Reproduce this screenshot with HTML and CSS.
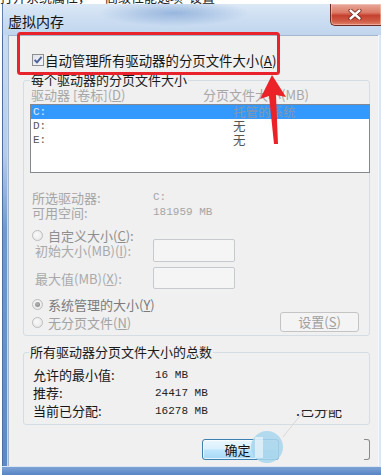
FILE: index.html
```html
<!DOCTYPE html>
<html lang="zh-CN">
<head>
<meta charset="utf-8">
<title>虚拟内存</title>
<link rel="stylesheet" href="styles.css">
</head>
<body>
<div class="topstrip"><span class="topstrip-text">打开系统属性，<span class="gap"></span>高级性能选项<span class="gap2"></span>设置</span></div>
<div class="window">
  <div class="titlebar">
    <span class="title">虚拟内存</span>
    <span class="close">
      <svg width="14" height="11" viewBox="0 0 14 11"><path d="M2.5 1.5 L11.5 9.5 M11.5 1.5 L2.5 9.5" stroke="#6b2019" stroke-width="4" stroke-linecap="round"/><path d="M2.5 1.5 L11.5 9.5 M11.5 1.5 L2.5 9.5" stroke="#fff" stroke-width="2.4" stroke-linecap="round"/></svg>
    </span>
  </div>
  <div class="frame-left"></div>
  <div class="client">
    <div class="auto-row">
      <span class="checkbox"><svg width="12" height="12" viewBox="0 0 12 12"><defs><linearGradient id="cb" x1="0" y1="0" x2="1" y2="1"><stop offset="0" stop-color="#dfe3ea"/><stop offset="1" stop-color="#f6f7f9"/></linearGradient></defs><rect x="0.5" y="0.5" width="11" height="11" fill="url(#cb)" stroke="#8f8f8f"/><path d="M2.6 5.8 L5 8.4 L9.6 2.8" fill="none" stroke="#4a5e9a" stroke-width="1.9"/></svg></span>
      <span class="auto-text">自动管理所有驱动器的分页文件大小(<u>A</u>)</span>
    </div>

    <fieldset class="group group-drives">
      <legend>每个驱动器的分页文件大小</legend>
      <div class="list-header"><span class="h-drive">驱动器 [卷标](<u>D</u>)</span><span>分页文件大小(MB)</span></div>
      <div class="listbox">
        <div class="lrow selected"><span class="l-drive mono">C:</span><span class="l-size">托管的系统</span></div>
        <div class="lrow"><span class="l-drive mono">D:</span><span class="l-size">无</span></div>
        <div class="lrow"><span class="l-drive mono">E:</span><span class="l-size">无</span></div>
      </div>
      <div class="info">
        <div class="info-row"><span class="info-label">所选驱动器:</span><span class="mono">C:</span></div>
        <div class="info-row"><span class="info-label">可用空间:</span><span class="mono">181959 MB</span></div>
      </div>
      <div class="radio-row custom"><span class="radio"></span><span class="radio-text">自定义大小(<u>C</u>):</span></div>
      <div class="field-row initial"><span class="field-label">初始大小(MB)(<u>I</u>):</span><span class="textbox"></span></div>
      <div class="field-row max"><span class="field-label">最大值(MB)(<u>X</u>):</span><span class="textbox"></span></div>
      <div class="radio-row system"><span class="radio checked"></span><span class="radio-text">系统管理的大小(<u>Y</u>)</span></div>
      <div class="radio-row none"><span class="radio"></span><span class="radio-text">无分页文件(<u>N</u>)</span><span class="btn-set">设置(<u>S</u>)</span></div>
    </fieldset>

    <fieldset class="group group-total">
      <legend>所有驱动器分页文件大小的总数</legend>
      <div class="total-row"><span class="total-label">允许的最小值:</span><span class="mono">16 MB</span></div>
      <div class="total-row"><span class="total-label">推荐:</span><span class="mono">24417 MB</span></div>
      <div class="total-row"><span class="total-label">当前已分配:</span><span class="mono">16278 MB</span></div>
    </fieldset>

    <div class="buttons">
      <span class="btn ok">确定</span>
      <span class="btn cancel"></span>
    </div>
  </div>
  <div class="frame-right"></div>
  <div class="frame-bottom"></div>
</div>

<div class="ghost-text"><span>.已分配</span></div>

<svg class="annot" width="381" height="475" viewBox="0 0 381 475">
  <line x1="283" y1="437" x2="303" y2="412" stroke="#d9d9d9" stroke-width="1"/>
  <circle cx="267" cy="447" r="16" fill="rgba(168,213,236,0.88)"/>
  <rect x="255" y="437" width="8" height="21" fill="rgba(255,255,255,0.55)"/>
  <rect x="18.5" y="33.5" width="260" height="40" rx="2" fill="none" stroke="#e8232b" stroke-width="3"/>
  <polygon points="272,75 286,97 276,95 278,144 274,144 269,96 260,99" fill="#ec2229"/>
</svg>
</body>
</html>
```
FILE: styles.css
```css
* { box-sizing: border-box; }
html, body { margin: 0; padding: 0; }
body {
  width: 381px;
  height: 475px;
  overflow: hidden;
  position: relative;
  background: #fff;
  font-family: "Noto Sans CJK SC", "Noto Sans", sans-serif;
  font-size: 13px;
  color: #1a1a1a;
}
u { text-decoration-thickness: 1px; text-underline-offset: 1px; }

.topstrip {
  height: 4px;
  overflow: hidden;
  clip-path: inset(0);
  contain: paint;
  white-space: nowrap;
}
.topstrip-text {
  display: block;
  font-size: 13px;
  line-height: 13px;
  transform: translateY(-10px);
  color: #222;
}
.gap { display: inline-block; width: 14px; }
.gap2 { display: inline-block; width: 6px; }

.window {
  margin-left: 2px;
  width: 379px;
  height: 471px;
  display: grid;
  grid-template-columns: 6px 370px 3px;
  grid-template-rows: 31px 431px 9px;
}

.titlebar {
  grid-column: 1 / 4;
  display: flex;
  align-items: flex-start;
  background:
    radial-gradient(ellipse 75px 13px at 172px 9px, rgba(112, 152, 206, 0.6), rgba(112, 152, 206, 0) 100%),
    linear-gradient(180deg, #dbe8f6 0%, #cadcf1 55%, #c0d5ed 100%);
  box-shadow: inset 1px 0 0 #5f7fae;
}
.title { margin: 9px 0 0 6px; font-size: 14px; line-height: 16px; color: #111; }
.close {
  margin-left: auto;
  width: 51px;
  height: 22px;
  display: flex;
  align-items: center;
  justify-content: center;
  padding-right: 2px;
  border: 1px solid #6e2a22;
  border-top: none;
  border-right: none;
  border-radius: 0 0 0 5px;
  background: linear-gradient(180deg, #e9a898 0%, #dc7d69 40%, #c5402f 55%, #cf5a43 80%, #e0836c 100%);
  box-shadow: inset 0 0 0 1px rgba(255, 220, 210, 0.45);
}

.frame-left {
  grid-column: 1;
  grid-row: 2;
  background: linear-gradient(180deg, #cbdcf1 0%, #b5cbe8 28%, #7199d0 45%, #5d89c6 100%);
  box-shadow: inset 1px 0 0 #4d6fa3, inset -1px 0 0 #c9d8ec;
}
.frame-right {
  grid-column: 3;
  grid-row: 2;
  background: #dde7f3;
  box-shadow: inset 1px 0 0 #f4f7fb;
}
.frame-bottom {
  grid-column: 1 / 4;
  grid-row: 3;
  background: linear-gradient(180deg, #dbe5f1 0, #dbe5f1 1px, #7ea3d6 1px, #5784c4 100%);
}

.client {
  grid-column: 2;
  grid-row: 2;
  background: #f0f0f0;
  border-top: 1px solid #a3b6ce;
  border-left: 1px solid #a3b6ce;
  padding: 0 8px 0 14px;
  display: flex;
  flex-direction: column;
}

.auto-row { margin-top: 17px; height: 14px; display: flex; align-items: center; }
.checkbox { margin-left: 9px; width: 12px; height: 12px; display: flex; }
.auto-text { margin-left: 1px; font-size: 13.4px; line-height: 14px; white-space: nowrap; color: #151515; }

.group {
  margin: 0;
  min-width: 0;
  border: 1px solid #d3dde3;
  border-radius: 3px;
}
.group legend { font-size: 13px; line-height: 16px; color: #1a1a1a; white-space: nowrap; }
.group-drives { margin-top: 5px; padding: 0 0 3px 6px; }
.group-drives legend { padding: 0 1px; }
.group-total { margin-top: 8px; padding: 0 0 4px 5px; }
.group-total legend { padding: 0 1px; }

.mono { font-family: "Liberation Mono", "DejaVu Sans Mono", monospace; font-size: 11px; }

.list-header { display: flex; line-height: 14px; color: #a7a7a7; white-space: nowrap; }
.h-drive { width: 173px; padding-left: 1px; }

.listbox {
  margin-top: 2px;
  margin-right: -1px;
  height: 69px;
  border: 1px solid #848891;
  background: #fff;
}
.lrow { display: flex; height: 14px; line-height: 14px; color: #555; white-space: nowrap; }
.l-drive { width: 202px; padding-left: 2px; }
.l-size { font-size: 12.5px; }
.lrow.selected { background: #3399ff; }
.lrow.selected .l-drive { color: #e4eefa; }
.lrow.selected .l-size { color: #8596ad; }

.info { margin-top: 17px; color: #a5a5a5; line-height: 15px; }
.info-row { display: flex; white-space: nowrap; }
.info-label { width: 123px; padding-left: 2px; }

.radio-row { display: flex; align-items: center; height: 14px; white-space: nowrap; }
.radio {
  margin-left: 2px;
  width: 11px;
  height: 11px;
  flex: none;
  border: 1px solid #bcbcbc;
  border-radius: 50%;
  background: radial-gradient(circle at 40% 40%, #fafafa 0%, #e4e4e4 100%);
  display: flex;
  align-items: center;
  justify-content: center;
}
.radio.checked::after {
  content: "";
  width: 5px;
  height: 5px;
  border-radius: 50%;
  background: radial-gradient(circle at 40% 40%, #b8b8b8, #7c7c7c);
}
.radio-text { margin-left: 5px; }
.custom { margin-top: 8px; color: #8e8e8e; }
.system { margin-top: 8px; color: #7b7b7b; }
.none { margin-top: 1px; height: 20px; color: #a3a3a3; }

.field-row { display: flex; align-items: center; height: 23px; white-space: nowrap; color: #a9a9a9; }
.initial { margin-top: -3px; }
.max { margin-top: 5px; height: 22px; }
.field-label { width: 123px; padding-left: 5px; }
.textbox {
  width: 82px;
  height: 100%;
  border: 1px solid #c6c9ce;
  border-radius: 2px;
  background: #f5f5f5;
}

.btn-set {
  margin-left: auto;
  margin-right: 10px;
  width: 79px;
  height: 20px;
  border: 1px solid #c4c4c4;
  border-radius: 3px;
  background: #f4f4f4;
  color: #9e9e9e;
  display: flex;
  align-items: center;
  justify-content: center;
  line-height: 18px;
}

.total-row { display: flex; height: 18px; line-height: 18px; white-space: nowrap; color: #161616; }
.total-row:first-of-type { margin-top: 6px; }
.total-label { width: 126px; padding-left: 4px; }
.total-row .mono { color: #222; }

.buttons { margin-top: 14px; height: 21px; display: flex; }
.btn { height: 100%; }
.ok {
  margin-left: 179px;
  width: 78px;
  border: 1px solid #3c7fb1;
  border-radius: 3px;
  background: linear-gradient(180deg, #eaf6fd 0%, #d9f0fc 48%, #bee6fd 52%, #a7d9f5 100%);
  box-shadow: inset 0 0 0 1px rgba(255, 255, 255, 0.7);
  display: flex;
  align-items: center;
  justify-content: center;
  padding-right: 6px;
  color: #111;
  line-height: 19px;
}
.cancel {
  margin-left: 85px;
  width: 6px;
  border: 1px solid #8a8a8a;
  border-left: none;
  border-radius: 0 3px 3px 0;
}

.ghost-text {
  position: absolute;
  left: 296px;
  top: 410px;
  height: 8px;
  overflow: hidden;
  white-space: nowrap;
}
.ghost-text span { display: block; margin-top: -7px; font-size: 14px; line-height: 14px; color: #222; }

.annot { position: absolute; left: 0; top: 0; pointer-events: none; }
```
